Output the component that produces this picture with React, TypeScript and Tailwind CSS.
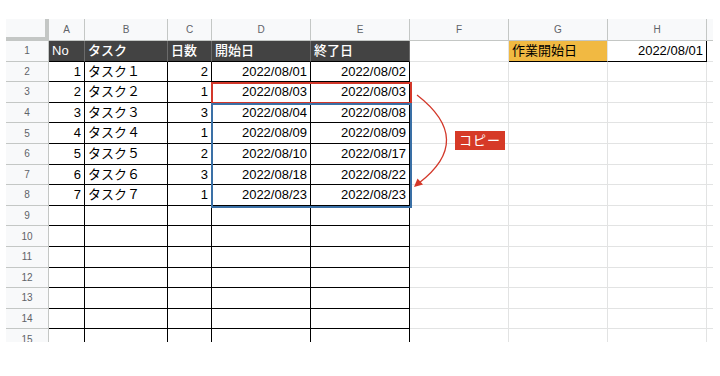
import React from "react";

const COLS = ["A", "B", "C", "D", "E", "F", "G", "H"];

const HEAD = ["No", "タスク", "日数", "開始日", "終了日"];

const ROWS = [
  ["1", "タスク１", "2", "2022/08/01", "2022/08/02"],
  ["2", "タスク２", "1", "2022/08/03", "2022/08/03"],
  ["3", "タスク３", "3", "2022/08/04", "2022/08/08"],
  ["4", "タスク４", "1", "2022/08/09", "2022/08/09"],
  ["5", "タスク５", "2", "2022/08/10", "2022/08/17"],
  ["6", "タスク６", "3", "2022/08/18", "2022/08/22"],
  ["7", "タスク７", "1", "2022/08/23", "2022/08/23"],
];

// text alignment per data column A..E
const ALIGN = ["justify-end", "justify-start", "justify-end", "justify-end", "justify-end"];

function RowHeader({ n }: { n: number }) {
  return (
    <div className="flex items-center justify-center border-r border-b border-[#c4c7c5] bg-[#f8f9fa] text-[10px] text-[#5f6368]">
      {n}
    </div>
  );
}

function Row({ n }: { n: number }) {
  const data = n >= 2 && n <= 8 ? ROWS[n - 2] : null;
  return (
    <>
      <RowHeader n={n} />
      {[0, 1, 2, 3, 4].map((i) => (
        <div
          key={i}
          className={`flex items-center border-r border-b border-black px-[3px] text-[13px] text-black ${ALIGN[i]}`}
        >
          {data ? data[i] : ""}
        </div>
      ))}
      <div className="border-r border-b border-[#e2e3e3]" />
      <div className="border-r border-b border-[#e2e3e3]" />
      <div className="border-r border-b border-[#e2e3e3]" />
      <div className="border-b border-[#e2e3e3]" />
    </>
  );
}

export default function App() {
  const rows = Array.from({ length: 14 }, (_, i) => i + 2);

  return (
    <div
      className="relative h-[376px] w-[720px] overflow-hidden bg-white pt-[19px] pl-[6px]"
      style={{ fontFamily: '"Liberation Sans", "Noto Sans CJK JP", sans-serif' }}
    >
      <div className="h-[323px] overflow-hidden">
        <div className="grid grid-cols-[43px_36px_83px_44px_99px_99px_99px_99px_99px_6px] grid-rows-[22px_repeat(15,20.6px)]">
          {/* column header row */}
          <div className="border-r-4 border-b-4 border-[#c4c7c5] bg-[#f8f9fa]" />
          {COLS.map((c) => (
            <div
              key={c}
              className="flex items-center justify-center border-r border-b border-[#c4c7c5] bg-[#f8f9fa] text-[10px] text-[#5f6368]"
            >
              {c}
            </div>
          ))}
          <div className="border-b border-[#c4c7c5] bg-[#f8f9fa]" />

          {/* row 1 */}
          <RowHeader n={1} />
          {HEAD.map((h) => (
            <div
              key={h}
              className="flex items-center border-r border-b border-r-[#6b6b6b] border-b-black bg-[#434343] px-[3px] text-[13px] font-medium text-white"
            >
              {h}
            </div>
          ))}
          <div className="border-r border-b border-[#e2e3e3]" />
          <div className="flex items-center border-r border-b border-r-[#e2e3e3] border-b-black bg-[#f1b942] px-[3px] text-[13px] text-black">
            作業開始日
          </div>
          <div className="flex items-center justify-end border-r border-b border-black px-[3px] text-[13px] text-black">
            2022/08/01
          </div>
          <div className="border-b border-[#e2e3e3]" />

          {rows.map((n) => (
            <Row key={n} n={n} />
          ))}
        </div>
      </div>

      {/* copy source / destination highlights */}
      <div className="absolute top-[82px] left-[211px] h-[22px] w-[201px] border-2 border-[#d3382a]" />
      <div className="absolute top-[103px] left-[211px] h-[105px] w-[201px] border-2 border-[#3a70a6]" />

      {/* arrow */}
      <svg className="pointer-events-none absolute top-0 left-0" width="720" height="376">
        <path d="M417 95 Q475 140 419 183" fill="none" stroke="#d3382a" strokeWidth="1.3" />
        <path d="M414 187 L417.5 178.5 L423 184.5 Z" fill="#d3382a" />
      </svg>

      <div className="absolute top-[131px] left-[455px] flex h-[19px] w-[50px] items-center justify-center bg-[#d63a27] text-[13px] tracking-[1px] text-white">
        コピー
      </div>
    </div>
  );
}
